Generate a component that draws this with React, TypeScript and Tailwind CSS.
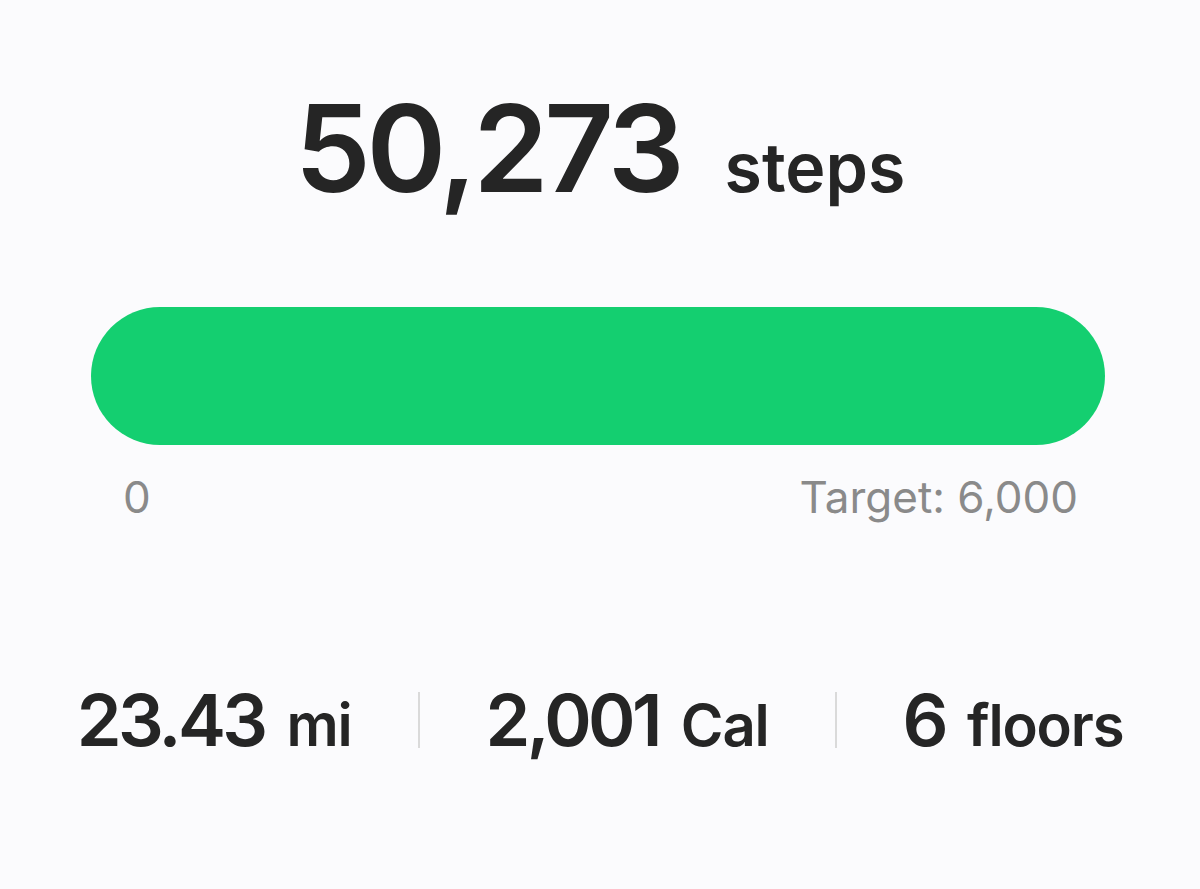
import React from "react";

const STATS = [
  { value: "23.43", unit: "mi" },
  { value: "2,001", unit: "Cal" },
  { value: "6", unit: "floors" },
];

const App = () => {
  return (
    <div
      className="w-[1200px] h-[889px] bg-[#fbfbfd] text-[#252525] overflow-hidden"
      style={{ fontFamily: "Inter, 'Noto Sans', sans-serif" }}
    >
      {/* headline count */}
      <div className="flex items-baseline justify-center pt-[88px]">
        <span className="text-[121px] leading-none font-semibold tracking-[-0.035em]">50,273</span>
        <span className="ml-[44px] text-[68px] leading-none font-semibold">steps</span>
      </div>

      {/* progress bar */}
      <div className="ml-[91px] w-[1014px] mt-[98px]">
        <div className="h-[138px] rounded-full bg-[#14cf70]" />
        <div className="flex justify-between mt-[30px] pl-[32px] pr-[27px] text-[44px] leading-none text-[#8a8a8a]">
          <span>0</span>
          <span>Target: 6,000</span>
        </div>
      </div>

      {/* summary row */}
      <div className="flex items-center justify-center mt-[165px]">
        {STATS.map((s, i) => (
          <React.Fragment key={s.unit}>
            {i > 0 && <div className="mx-[66px] w-[2px] h-[56px] bg-[#dadada]" />}
            <div className="flex items-baseline">
              <span className="text-[72px] leading-none font-semibold tracking-[-0.05em]">{s.value}</span>
              <span className="ml-[22px] text-[58px] leading-none font-semibold tracking-[-0.02em]">{s.unit}</span>
            </div>
          </React.Fragment>
        ))}
      </div>
    </div>
  );
};

export default App;
